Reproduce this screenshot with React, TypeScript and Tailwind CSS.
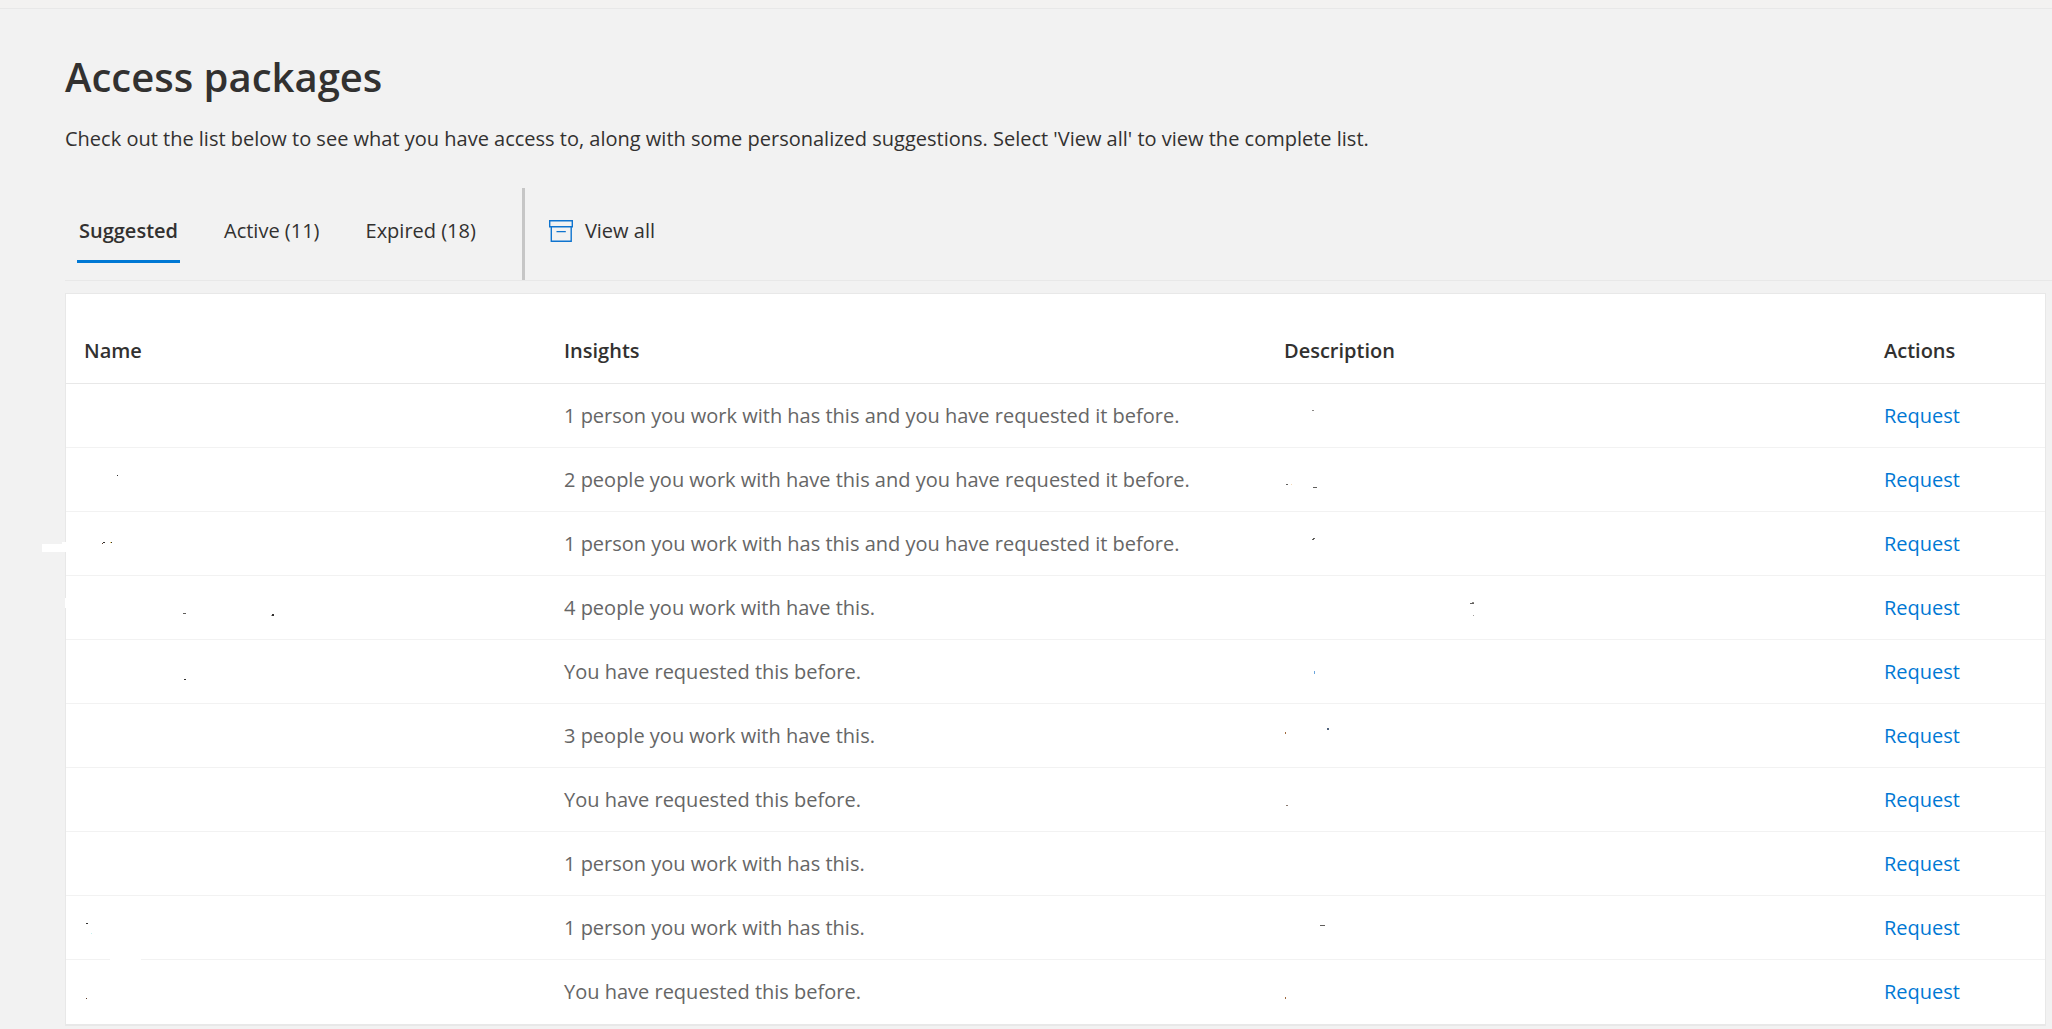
import { useState } from "react";

// x, y, width, height inside the cell, then the colour
type Speck = [number, number, number, number, string];

type AccessPackage = {
  id: number;
  insight: string;
  name?: Speck[];
  description?: Speck[];
};

const packages: AccessPackage[] = [
  {
    id: 1,
    insight: "1 person you work with has this and you have requested it before.",
    description: [[46, 26, 2, 1, "#8a8886"]],
  },
  {
    id: 2,
    insight: "2 people you work with have this and you have requested it before.",
    name: [[51, 27, 1, 1, "#323130"]],
    description: [
      [20, 36, 2, 1, "#605e5c"],
      [25, 36, 1, 1, "#f5d9b8"],
      [47, 39, 4, 1, "#605e5c"],
    ],
  },
  {
    id: 3,
    insight: "1 person you work with has this and you have requested it before.",
    name: [
      [36, 31, 1, 1, "#5c3a28"],
      [37, 30, 2, 1, "#323130"],
      [44, 30, 1, 1, "#f0d060"],
      [45, 30, 1, 1, "#323130"],
    ],
    description: [
      [47, 26, 2, 1, "#605e5c"],
      [46, 27, 2, 1, "#605e5c"],
    ],
  },
  {
    id: 4,
    insight: "4 people you work with have this.",
    name: [
      [117, 37, 3, 1, "#605e5c"],
      [206, 38, 2, 2, "#323130"],
      [205, 39, 1, 1, "#a19f9d"],
    ],
    description: [
      [204, 27, 4, 1, "#605e5c"],
      [206, 26, 2, 1, "#8a8886"],
      [207, 39, 1, 1, "#a19f9d"],
    ],
  },
  {
    id: 5,
    insight: "You have requested this before.",
    name: [[118, 39, 2, 1, "#323130"]],
    description: [[48, 31, 1, 3, "#6ba5dc"]],
  },
  {
    id: 6,
    insight: "3 people you work with have this.",
    description: [
      [19, 28, 1, 2, "#a0693c"],
      [61, 24, 2, 2, "#50627c"],
    ],
  },
  {
    id: 7,
    insight: "You have requested this before.",
    description: [[20, 37, 2, 1, "#8a7a70"]],
  },
  { id: 8, insight: "1 person you work with has this." },
  {
    id: 9,
    insight: "1 person you work with has this.",
    name: [
      [20, 27, 2, 1, "#323130"],
      [25, 37, 1, 1, "#c8f0f0"],
      [44, 63, 31, 1, "#ffffff"],
    ],
    description: [[54, 29, 5, 1, "#605e5c"]],
  },
  {
    id: 10,
    insight: "You have requested this before.",
    name: [[20, 38, 1, 1, "#5c3a28"]],
    description: [[19, 37, 1, 2, "#a0693c"]],
  },
];

const tabs = [
  { key: "suggested", label: "Suggested" },
  { key: "active", label: "Active (11)" },
  { key: "expired", label: "Expired (18)" },
];

const rowGrid = "grid grid-cols-[4fr_6fr_5fr_179px]";

// what is left of a redacted value
function Redacted({ specks = [] }: { specks?: Speck[] }) {
  return (
    <svg className="absolute left-0 top-0 h-16 w-full" shapeRendering="crispEdges" aria-hidden="true">
      {specks.map(([x, y, width, height, fill], i) => (
        <rect key={i} x={x} y={y} width={width} height={height} fill={fill} />
      ))}
    </svg>
  );
}

function ArchiveIcon() {
  return (
    <svg width="24" height="22" viewBox="0 0 24 22" fill="none" stroke="#0f74cf" strokeWidth="1.4" aria-hidden="true">
      <path d="M.7.7h22.6v6H.7zM2.3 6.7v14.6h19.9V6.7M7.5 11.6h9.3" />
    </svg>
  );
}

export default function App() {
  const [activeTab, setActiveTab] = useState("suggested");

  return (
    <div className="min-h-screen bg-[#f2f2f2] font-['Open_Sans',sans-serif] text-xl leading-7 text-[#323130]">
      <div className="h-[9px] border-b border-[#e8e8e8] bg-[#f3f2f1]" />
      <main className="pl-[65px] pt-10">
        <h1 className="text-[40px] font-semibold leading-[56px]">Access packages</h1>
        <p className="mt-5">
          Check out the list below to see what you have access to, along with some personalized suggestions. Select
          'View all' to view the complete list.
        </p>

        <div className="mt-[35px] flex h-[93px] border-b border-[#e8e8e8]">
          <div role="tablist" className="flex items-start gap-[42px] pl-3 pt-5">
            {tabs.map((tab) => (
              <button
                key={tab.key}
                type="button"
                role="tab"
                aria-selected={activeTab === tab.key}
                onClick={() => setActiveTab(tab.key)}
                className={
                  activeTab === tab.key
                    ? "h-[55px] border-b-[3px] border-[#0078d4] px-0.5 pb-1.5 font-semibold"
                    : "h-[55px] border-b-[3px] border-transparent px-0.5 pb-1.5"
                }
              >
                {tab.label}
              </button>
            ))}
          </div>
          <div className="ml-11 w-[3px] bg-[#c6c6c6]" />
          <button type="button" className="ml-6 flex items-center gap-3 self-center pb-1.5">
            <ArchiveIcon />
            View all
          </button>
        </div>

        <div className="mr-1.5 mt-3 border border-b-2 border-[#e8e8e8] bg-white">
          <table className="relative block w-full text-left">
            <thead className="block">
              <tr className={`${rowGrid} h-[90px] items-end border-b border-[#e8e8e8] pb-[18px]`}>
                <th className="px-[18px] font-semibold">Name</th>
                <th className="px-[18px] font-semibold">Insights</th>
                <th className="px-[18px] font-semibold">Description</th>
                <th className="px-[18px] font-semibold">Actions</th>
              </tr>
            </thead>
            <tbody className="block">
              {packages.map((pkg) => (
                <tr key={pkg.id} className={`${rowGrid} h-16 items-center border-b border-[#f2f2f2] last:border-b-0`}>
                  <td className="relative h-full">
                    <Redacted specks={pkg.name} />
                    {/* eraser strokes that run past the card's left edge */}
                    {pkg.id === 3 && (
                      <span className="absolute -left-6 top-[30px] flex h-2.5 w-6 items-end">
                        <span className="h-2 w-5 bg-white" />
                        <span className="h-2.5 w-1 bg-white" />
                      </span>
                    )}
                    {pkg.id === 4 && <span className="absolute -left-px top-[22px] h-2.5 w-px bg-white" />}
                  </td>
                  <td className="px-[18px] text-[#666666]">{pkg.insight}</td>
                  <td className="relative h-full">
                    <Redacted specks={pkg.description} />
                  </td>
                  <td className="px-[18px]">
                    <a href="#request" className="text-[#0078d4]">
                      Request
                    </a>
                  </td>
                </tr>
              ))}
            </tbody>
          </table>
        </div>
      </main>
    </div>
  );
}
